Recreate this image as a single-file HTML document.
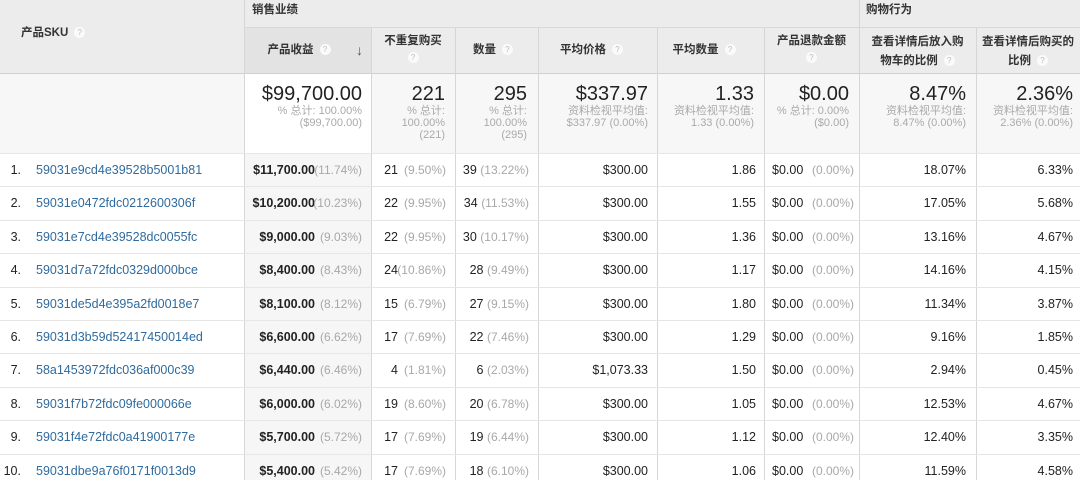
<!DOCTYPE html>
<html><head><meta charset="utf-8"><style>
*{margin:0;padding:0;box-sizing:border-box}
body{width:1080px;height:480px;overflow:hidden;background:#fff;font-family:"Liberation Sans","Noto Sans CJK SC",sans-serif;color:#222;position:relative;font-size:12.5px}
.a{position:absolute}
.hd{background:#ececec}
.vl{position:absolute;top:0;width:1px;background:#d6d6d6}
.hl{position:absolute;height:1px;background:#dedede}
.h{position:absolute;font-weight:bold;font-size:11.5px;color:#333;text-align:center;line-height:20px}
.q{display:inline-block;width:11px;height:11px;border-radius:50%;background:#fafafa;color:#bbb;font-size:8px;line-height:11px;text-align:center;font-weight:normal;vertical-align:middle;margin-left:6px}
.big{position:absolute;top:83px;font-size:20px;color:#222;text-align:right;line-height:22px}
.sub{position:absolute;top:105px;font-size:11px;color:#aaa;text-align:right;line-height:12px}
.row{position:absolute;left:0;width:1080px;height:34px;line-height:33px;border-top:1px solid #e6e6e6}
.row span{position:absolute;white-space:nowrap}
.r{text-align:right}
.g{color:#a8a8a8;font-size:12px}
.lnk{color:#2f6b9e}
.b{font-weight:bold}
</style></head><body>
<div class="a hd" style="left:0;top:0;width:1080px;height:73px"></div>
<div class="a" style="left:244px;top:27px;width:127px;height:46px;background:#e3e3e3"></div>
<div class="hl" style="left:244px;top:27px;width:836px;background:#d8d8d8"></div>
<div class="hl" style="left:0;top:73px;width:1080px;background:#d0d0d0"></div>
<div class="a" style="left:0;top:74px;width:1080px;height:79px;background:#f7f7f7"></div>
<div class="a" style="left:244px;top:74px;width:127px;height:79px;background:#fff"></div>
<div class="a" style="left:244px;top:153px;width:127px;height:327px;background:#f6f6f6"></div>
<div class="vl" style="left:244px;height:480px"></div>
<div class="vl" style="left:371px;top:27px;height:453px"></div>
<div class="vl" style="left:455px;top:27px;height:453px"></div>
<div class="vl" style="left:538px;top:27px;height:453px"></div>
<div class="vl" style="left:657px;top:27px;height:453px"></div>
<div class="vl" style="left:764px;top:27px;height:453px"></div>
<div class="vl" style="left:859px;height:480px"></div>
<div class="vl" style="left:976px;top:27px;height:453px"></div>

<div class="h" style="left:252px;top:0;text-align:left">销售业绩</div>
<div class="h" style="left:866px;top:0;text-align:left">购物行为</div>
<div class="h" style="left:21px;top:23px;text-align:left">产品SKU<span class="q">?</span></div>
<div class="h" style="left:244px;top:40px;width:110px">产品收益<span class="q">?</span></div>
<div class="a" style="left:356px;top:40px;font-size:14px;color:#555;line-height:20px">↓</div>
<div class="h" style="left:371px;top:33px;width:84px;line-height:17px">不重复购买<br><span class="q" style="margin:0">?</span></div>
<div class="h" style="left:455px;top:40px;width:76px">数量<span class="q">?</span></div>
<div class="h" style="left:538px;top:40px;width:107px">平均价格<span class="q">?</span></div>
<div class="h" style="left:657px;top:40px;width:94px">平均数量<span class="q">?</span></div>
<div class="h" style="left:764px;top:33px;width:95px;line-height:17px">产品退款金额<br><span class="q" style="margin:0">?</span></div>
<div class="h" style="left:859px;top:33px;width:117px;line-height:19px">查看详情后放入购<br>物车的比例<span class="q">?</span></div>
<div class="h" style="left:976px;top:33px;width:104px;line-height:19px">查看详情后购买的<br>比例<span class="q">?</span></div>

<div class="big" style="left:244px;width:118px">$99,700.00</div>
<div class="sub" style="left:244px;width:118px">% 总计: 100.00%<br>($99,700.00)</div>
<div class="big" style="left:371px;width:74px">221</div>
<div class="sub" style="left:371px;width:74px">% 总计:<br>100.00%<br>(221)</div>
<div class="big" style="left:454px;width:73px">295</div>
<div class="sub" style="left:454px;width:73px">% 总计:<br>100.00%<br>(295)</div>
<div class="big" style="left:557px;width:91px">$337.97</div>
<div class="sub" style="left:557px;width:91px">资料检视平均值:<br>$337.97 (0.00%)</div>
<div class="big" style="left:659px;width:95px">1.33</div>
<div class="sub" style="left:659px;width:95px">资料检视平均值:<br>1.33 (0.00%)</div>
<div class="big" style="left:764px;width:85px">$0.00</div>
<div class="sub" style="left:764px;width:85px">% 总计: 0.00%<br>($0.00)</div>
<div class="big" style="left:859px;width:107px">8.47%</div>
<div class="sub" style="left:859px;width:107px">资料检视平均值:<br>8.47% (0.00%)</div>
<div class="big" style="left:976px;width:97px">2.36%</div>
<div class="sub" style="left:976px;width:97px">资料检视平均值:<br>2.36% (0.00%)</div>

<div class="row" style="top:153px"><span class="r" style="left:0;width:21px">1.</span><span class="lnk" style="left:36px">59031e9cd4e39528b5001b81</span><span class="r b" style="right:765px">$11,700.00</span><span class="r g" style="right:718px">(11.74%)</span><span class="r" style="right:682px">21</span><span class="r g" style="right:634px">(9.50%)</span><span class="r" style="right:551px">39 <span class="g" style="position:static">(13.22%)</span></span><span class="r" style="right:432px">$300.00</span><span class="r" style="right:324px">1.86</span><span style="left:772px">$0.00</span><span class="g" style="left:812px">(0.00%)</span><span class="r" style="right:114px">18.07%</span><span class="r" style="right:7px">6.33%</span></div>
<div class="row" style="top:186.4px"><span class="r" style="left:0;width:21px">2.</span><span class="lnk" style="left:36px">59031e0472fdc0212600306f</span><span class="r b" style="right:765px">$10,200.00</span><span class="r g" style="right:718px">(10.23%)</span><span class="r" style="right:682px">22</span><span class="r g" style="right:634px">(9.95%)</span><span class="r" style="right:551px">34 <span class="g" style="position:static">(11.53%)</span></span><span class="r" style="right:432px">$300.00</span><span class="r" style="right:324px">1.55</span><span style="left:772px">$0.00</span><span class="g" style="left:812px">(0.00%)</span><span class="r" style="right:114px">17.05%</span><span class="r" style="right:7px">5.68%</span></div>
<div class="row" style="top:219.8px"><span class="r" style="left:0;width:21px">3.</span><span class="lnk" style="left:36px">59031e7cd4e39528dc0055fc</span><span class="r b" style="right:765px">$9,000.00</span><span class="r g" style="right:718px">(9.03%)</span><span class="r" style="right:682px">22</span><span class="r g" style="right:634px">(9.95%)</span><span class="r" style="right:551px">30 <span class="g" style="position:static">(10.17%)</span></span><span class="r" style="right:432px">$300.00</span><span class="r" style="right:324px">1.36</span><span style="left:772px">$0.00</span><span class="g" style="left:812px">(0.00%)</span><span class="r" style="right:114px">13.16%</span><span class="r" style="right:7px">4.67%</span></div>
<div class="row" style="top:253.2px"><span class="r" style="left:0;width:21px">4.</span><span class="lnk" style="left:36px">59031d7a72fdc0329d000bce</span><span class="r b" style="right:765px">$8,400.00</span><span class="r g" style="right:718px">(8.43%)</span><span class="r" style="right:682px">24</span><span class="r g" style="right:634px">(10.86%)</span><span class="r" style="right:551px">28 <span class="g" style="position:static">(9.49%)</span></span><span class="r" style="right:432px">$300.00</span><span class="r" style="right:324px">1.17</span><span style="left:772px">$0.00</span><span class="g" style="left:812px">(0.00%)</span><span class="r" style="right:114px">14.16%</span><span class="r" style="right:7px">4.15%</span></div>
<div class="row" style="top:286.6px"><span class="r" style="left:0;width:21px">5.</span><span class="lnk" style="left:36px">59031de5d4e395a2fd0018e7</span><span class="r b" style="right:765px">$8,100.00</span><span class="r g" style="right:718px">(8.12%)</span><span class="r" style="right:682px">15</span><span class="r g" style="right:634px">(6.79%)</span><span class="r" style="right:551px">27 <span class="g" style="position:static">(9.15%)</span></span><span class="r" style="right:432px">$300.00</span><span class="r" style="right:324px">1.80</span><span style="left:772px">$0.00</span><span class="g" style="left:812px">(0.00%)</span><span class="r" style="right:114px">11.34%</span><span class="r" style="right:7px">3.87%</span></div>
<div class="row" style="top:320px"><span class="r" style="left:0;width:21px">6.</span><span class="lnk" style="left:36px">59031d3b59d52417450014ed</span><span class="r b" style="right:765px">$6,600.00</span><span class="r g" style="right:718px">(6.62%)</span><span class="r" style="right:682px">17</span><span class="r g" style="right:634px">(7.69%)</span><span class="r" style="right:551px">22 <span class="g" style="position:static">(7.46%)</span></span><span class="r" style="right:432px">$300.00</span><span class="r" style="right:324px">1.29</span><span style="left:772px">$0.00</span><span class="g" style="left:812px">(0.00%)</span><span class="r" style="right:114px">9.16%</span><span class="r" style="right:7px">1.85%</span></div>
<div class="row" style="top:353.4px"><span class="r" style="left:0;width:21px">7.</span><span class="lnk" style="left:36px">58a1453972fdc036af000c39</span><span class="r b" style="right:765px">$6,440.00</span><span class="r g" style="right:718px">(6.46%)</span><span class="r" style="right:682px">4</span><span class="r g" style="right:634px">(1.81%)</span><span class="r" style="right:551px">6 <span class="g" style="position:static">(2.03%)</span></span><span class="r" style="right:432px">$1,073.33</span><span class="r" style="right:324px">1.50</span><span style="left:772px">$0.00</span><span class="g" style="left:812px">(0.00%)</span><span class="r" style="right:114px">2.94%</span><span class="r" style="right:7px">0.45%</span></div>
<div class="row" style="top:386.8px"><span class="r" style="left:0;width:21px">8.</span><span class="lnk" style="left:36px">59031f7b72fdc09fe000066e</span><span class="r b" style="right:765px">$6,000.00</span><span class="r g" style="right:718px">(6.02%)</span><span class="r" style="right:682px">19</span><span class="r g" style="right:634px">(8.60%)</span><span class="r" style="right:551px">20 <span class="g" style="position:static">(6.78%)</span></span><span class="r" style="right:432px">$300.00</span><span class="r" style="right:324px">1.05</span><span style="left:772px">$0.00</span><span class="g" style="left:812px">(0.00%)</span><span class="r" style="right:114px">12.53%</span><span class="r" style="right:7px">4.67%</span></div>
<div class="row" style="top:420.2px"><span class="r" style="left:0;width:21px">9.</span><span class="lnk" style="left:36px">59031f4e72fdc0a41900177e</span><span class="r b" style="right:765px">$5,700.00</span><span class="r g" style="right:718px">(5.72%)</span><span class="r" style="right:682px">17</span><span class="r g" style="right:634px">(7.69%)</span><span class="r" style="right:551px">19 <span class="g" style="position:static">(6.44%)</span></span><span class="r" style="right:432px">$300.00</span><span class="r" style="right:324px">1.12</span><span style="left:772px">$0.00</span><span class="g" style="left:812px">(0.00%)</span><span class="r" style="right:114px">12.40%</span><span class="r" style="right:7px">3.35%</span></div>
<div class="row" style="top:453.6px"><span class="r" style="left:0;width:21px">10.</span><span class="lnk" style="left:36px">59031dbe9a76f0171f0013d9</span><span class="r b" style="right:765px">$5,400.00</span><span class="r g" style="right:718px">(5.42%)</span><span class="r" style="right:682px">17</span><span class="r g" style="right:634px">(7.69%)</span><span class="r" style="right:551px">18 <span class="g" style="position:static">(6.10%)</span></span><span class="r" style="right:432px">$300.00</span><span class="r" style="right:324px">1.06</span><span style="left:772px">$0.00</span><span class="g" style="left:812px">(0.00%)</span><span class="r" style="right:114px">11.59%</span><span class="r" style="right:7px">4.58%</span></div>
</body></html>
